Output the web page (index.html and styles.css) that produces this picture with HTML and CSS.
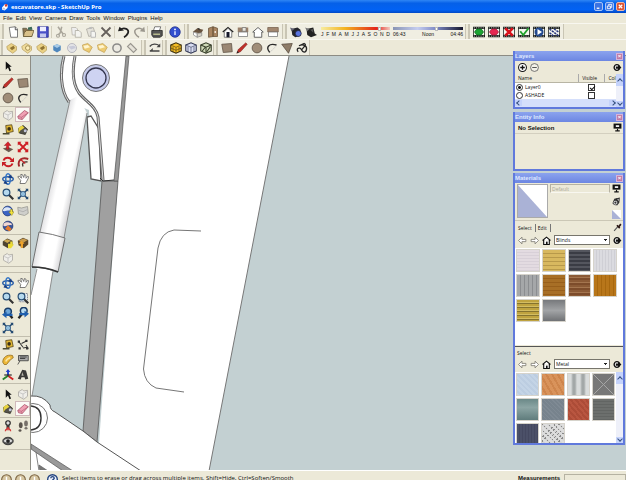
FILE: index.html
```html
<!DOCTYPE html>
<html lang="en">
<head>
<meta charset="utf-8">
<title>escavatore.skp - SketchUp Pro</title>
<link rel="stylesheet" href="styles.css">
</head>
<body>
<svg class="sprite" aria-hidden="true">
  <symbol id="new" viewBox="0 0 16 16"><path d="M3 2l8-1 3 3v11H5z" fill="#fff" stroke="#555"/><path d="M11 1v4h3" fill="#ddd" stroke="#333"/></symbol>
  <symbol id="open" viewBox="0 0 16 16"><path d="M1 3h5l2 2h5v9H2z" fill="#8a7350" stroke="#554"/><path d="M3 9l3-3h10l-3 8H2z" fill="#d8c08a" stroke="#665530"/><path d="M8 2l5-1 1 4H8z" fill="#3c6a58"/></symbol>
  <symbol id="save" viewBox="0 0 16 16"><path d="M1 1h14v14H1z" fill="#4a50c8" stroke="#23268a"/><path d="M4 1h8v6H4z" fill="#eef"/><path d="M4 10h8v5H4z" fill="#c5c9ee"/></symbol>
  <symbol id="cut" viewBox="0 0 16 16"><path d="M4 1l7 10M9 1L7 9l-3 3" fill="none" stroke="#aaa69b" stroke-width="2"/><circle cx="4" cy="13" r="2" fill="none" stroke="#aaa69b" stroke-width="1.5"/><circle cx="12" cy="12" r="2" fill="none" stroke="#aaa69b" stroke-width="1.5"/></symbol>
  <symbol id="copy" viewBox="0 0 16 16"><path d="M2 2h6l2 2v8H3z" fill="#eee" stroke="#b5b2a8"/><path d="M7 6h5l3 3v6H7z" fill="#f4f4f0" stroke="#aaa79d"/></symbol>
  <symbol id="paste" viewBox="0 0 16 16"><path d="M2 4l9-2 3 9-9 3z" fill="#e4e2da" stroke="#aaa79d"/><path d="M5 2l4-1v3H5z" fill="#bbb"/><path d="M8 7h4l2 2v6H8z" fill="#f5f5f2" stroke="#aaa"/></symbol>
  <symbol id="del" viewBox="0 0 16 16"><path d="M2 2l12 12M14 2L2 14" stroke="#66615d" stroke-width="2.4"/></symbol>
  <symbol id="undo" viewBox="0 0 16 16"><path d="M3 5c5-4 13-1 10 5-1 2-3 4-5 5" fill="none" stroke="#222" stroke-width="2.4"/><path d="M0 7l2-6 6 5z" fill="#222"/></symbol>
  <symbol id="redo" viewBox="0 0 16 16"><path d="M13 5C8 1 0 4 3 10c1 2 3 4 5 5" fill="none" stroke="#9b978e" stroke-width="2"/><path d="M16 8l-1-7-6 6z" fill="#9b978e"/></symbol>
  <symbol id="print" viewBox="0 0 16 16"><path d="M5 1h8l-2 6H3z" fill="#fff" stroke="#555"/><path d="M1 6h14v7l-3 2H3l-2-3z" fill="#555" stroke="#222"/><path d="M3 10h9v2H3z" fill="#b6b98c"/></symbol>
  <symbol id="info" viewBox="0 0 16 16"><circle cx="8" cy="8" r="7" fill="#3350cf" stroke="#1c2c88"/><path d="M8 7v5" stroke="#dfe6ff" stroke-width="2"/><circle cx="8" cy="4.5" r="1.2" fill="#fff"/></symbol>
  <symbol id="iso" viewBox="0 0 16 16"><path d="M1 8l6-5 8 2-3 5z" fill="#695440"/><path d="M2 8l5 2v5l-5-3z" fill="#fff" stroke="#888"/><path d="M7 10l6-1v4l-6 2z" fill="#d9d4ca" stroke="#888"/><path d="M7 3h3v3z" fill="#222"/></symbol>
  <symbol id="top" viewBox="0 0 16 16"><path d="M2 3l6-2v13l-6 1zM8 1l6 2v11H8z" fill="#a88461" stroke="#665039"/><path d="M10 7h2v2h-2z" fill="#fff"/></symbol>
  <symbol id="front" viewBox="0 0 16 16"><path d="M1 8l7-6 7 6" fill="none" stroke="#222" stroke-width="1.6"/><path d="M3 8l5-5 5 5v7H3z" fill="#fff" stroke="#555"/><path d="M6 8h4v7H6z" fill="#15182a"/></symbol>
  <symbol id="right" viewBox="0 0 16 16"><path d="M1 2h14v6H1z" fill="#9a806a"/><path d="M2 8h12v6H2z" fill="#fff" stroke="#777"/><path d="M7 2h5v5H7z" fill="#e9e6dd" stroke="#777"/></symbol>
  <symbol id="back" viewBox="0 0 16 16"><path d="M3 15V8L1 8l7-6 7 6h-2v7z" fill="#fff" stroke="#555" stroke-width="1.2"/></symbol>
  <symbol id="left" viewBox="0 0 16 16"><path d="M1 2h14v6H1z" fill="#a28770" stroke="#75604e"/><path d="M2 8h12v6H2z" fill="#fff" stroke="#777"/></symbol>
  <symbol id="shadow" viewBox="0 0 16 16"><path d="M2 4l8-2 4 3v8l-7 2-4-3z" fill="#25262c"/><path d="M0 2l6 2-4 3z" fill="#667"/><circle cx="11" cy="10" r="4" fill="#5a74e0" stroke="#223"/></symbol>
  <symbol id="shadow2" viewBox="0 0 16 16"><path d="M2 4l9-2 2 8 3 2-8 3-5-3z" fill="#222"/><path d="M0 2l6 2-3 3z" fill="#777"/><path d="M7 5l4-1v5z" fill="#555"/></symbol>
  <symbol id="film" viewBox="0 0 16 16"><path d="M0 1h16v14H0z" fill="#1b1f1b"/><path d="M1 4h14v8H1z" fill="#f4f6ef"/><path d="M1 2.5h14M1 13.5h14" stroke="#eee" stroke-dasharray="1.5 1.5"/></symbol>
  <symbol id="scene-add" viewBox="0 0 16 16"><use href="#film"/><path d="M2 8l3-4h6l3 4-3 4H5z" fill="#1ca433" stroke="#0a6a1d"/></symbol>
  <symbol id="scene-del" viewBox="0 0 16 16"><use href="#film"/><path d="M2 8l3-4h6l3 4-3 4H5z" fill="#e62852" stroke="#a3183a"/></symbol>
  <symbol id="scene-x" viewBox="0 0 16 16"><use href="#film"/><path d="M3 3l10 10M13 3L3 13" stroke="#d9121b" stroke-width="3.5"/></symbol>
  <symbol id="scene-ok" viewBox="0 0 16 16"><use href="#film"/><path d="M3 7l4 5 7-9" fill="none" stroke="#1fa12c" stroke-width="2.5"/></symbol>
  <symbol id="scene-play" viewBox="0 0 16 16"><use href="#film"/><circle cx="8" cy="8" r="6" fill="#22498f"/><path d="M6 4l6 4-6 4z" fill="#fff"/></symbol>
  <symbol id="scene-set" viewBox="0 0 16 16"><use href="#film"/><path d="M2 4l12 9M8 4l6 4M2 9l5 4" stroke="#27357d" stroke-width="2" stroke-dasharray="3 1"/></symbol>
  <symbol id="gold" viewBox="0 0 16 16"><path d="M1 6l6-4 7 4v5l-5 4-7-5z" fill="#ead184" stroke="#b9a062"/><path d="M5 8l5-3 2 3-4 3z" fill="#8f7333"/></symbol>
  <symbol id="gold2" viewBox="0 0 16 16"><path d="M1 6l6-4 7 4v5l-5 4-7-5z" fill="#efdc9c" stroke="#b9a062"/><circle cx="9" cy="8" r="3" fill="#fff0b8" stroke="#8c753b"/></symbol>
  <symbol id="gold3" viewBox="0 0 16 16"><path d="M2 4l7-2 6 5-4 7-8-4z" fill="#edcb72" stroke="#c3a256"/><path d="M3 5l6-1 3 3-7 2z" fill="#fff5cf"/></symbol>
  <symbol id="bluecube" viewBox="0 0 16 16"><path d="M3 5l5-2 5 2v6l-5 3-5-3z" fill="#4f87bd"/><path d="M3 5l5-2 5 2-5 3z" fill="#a9cbe6"/></symbol>
  <symbol id="ghost" viewBox="0 0 16 16"><circle cx="8" cy="8" r="6" fill="#e4e4e6" stroke="#aaaab4"/><path d="M3 6l8-1 2 3-6 2z" fill="#c7c9d8"/></symbol>
  <symbol id="ring" viewBox="0 0 16 16"><circle cx="8" cy="8" r="5.5" fill="#eceae2" stroke="#8b8a88" stroke-width="2"/></symbol>
  <symbol id="tilt" viewBox="0 0 16 16"><path d="M6 2l8 8-4 4-8-8z" fill="#e6e3d9" stroke="#99968f" stroke-width="1.5"/></symbol>
  <symbol id="swap" viewBox="0 0 16 16"><path d="M1 6c3-4 9-4 13-1M1 12h13" fill="none" stroke="#444" stroke-width="1.8"/><path d="M15 2v5h-5zM1 12l4-4v4z" fill="#444"/></symbol>
  <symbol id="cube-y" viewBox="0 0 16 16"><path d="M1 4l7-3 7 3v8l-7 3-7-3z" fill="#f5bd25" stroke="#3c3010" stroke-width="1.4"/><path d="M1 4l7 3 7-3M8 7v8M4 6v8M12 6v7M1 8l7 3 7-3" fill="none" stroke="#3c3010" stroke-width=".7"/></symbol>
  <symbol id="cube-b" viewBox="0 0 16 16"><path d="M1 4l7-3 7 3v8l-7 3-7-3z" fill="#d9ddf2" stroke="#333955" stroke-width="1.4"/><path d="M1 4l7 3 7-3M8 7v8M4 6v8M12 6v7" fill="none" stroke="#333955" stroke-width=".8"/></symbol>
  <symbol id="cube-g" viewBox="0 0 16 16"><path d="M1 4l7-3 7 3v8l-7 3-7-3z" fill="#cfd9b7" stroke="#363d29" stroke-width="1.4"/><path d="M1 4l7 3 7-3M8 7v8M3 12l4-5M9 13l5-7" fill="none" stroke="#363d29" stroke-width="1.4"/></symbol>
  <symbol id="rect" viewBox="0 0 16 16"><path d="M1 3l13-1 1 11-12 1z" fill="#9b8874" stroke="#5d5144"/></symbol>
  <symbol id="pencil" viewBox="0 0 16 16"><path d="M1 15l2-5L13 1l2 2L6 13z" fill="#c0312b" stroke="#6b1a15" stroke-width=".6"/><path d="M1 15l1-3 2 2z" fill="#222"/></symbol>
  <symbol id="circle" viewBox="0 0 16 16"><circle cx="8" cy="8" r="6.5" fill="#a08d78" stroke="#554a3e"/></symbol>
  <symbol id="arc" viewBox="0 0 16 16"><path d="M5 14C-1 7 4 1 14 4" fill="none" stroke="#2b2b2b" stroke-width="1.8"/><path d="M5 14l9-9" stroke="#bbb" stroke-dasharray="2 1"/></symbol>
  <symbol id="poly" viewBox="0 0 16 16"><path d="M1 3l14-1-5 13z" fill="#8f7d69" stroke="#554a3e"/></symbol>
  <symbol id="free" viewBox="0 0 16 16"><path d="M3 13c-4-4 2-7 4-3s6 5 7 0-5-8-10-5l7-3c4 1-1 5-4 9" fill="none" stroke="#252525" stroke-width="1.7"/></symbol>
  <symbol id="arrow" viewBox="0 0 16 16"><path d="M5 2v11l3-3 2 5 2-1-2-5h3z" fill="#111"/></symbol>
  <symbol id="comp" viewBox="0 0 16 16"><path d="M2 5l5-3 2 2 5-1v8l-5 4-7-4z" fill="#efeee9" stroke="#a6a39c"/><path d="M3 6l5 2 5-3M8 8v6" fill="none" stroke="#bbb"/></symbol>
  <symbol id="eraser" viewBox="0 0 16 16"><path d="M1 10l9-8 5 3-8 9-5-1z" fill="#f0a0b4" stroke="#a34c62"/><path d="M1 10l5 1 9-6M6 11l1 3" fill="none" stroke="#b8647a"/></symbol>
  <symbol id="tape" viewBox="0 0 16 16"><path d="M5 2l8-1 2 9-9 2z" fill="#e1b836" stroke="#4c3b10"/><circle cx="9.5" cy="6.5" r="2.4" fill="#3c3014"/><path d="M1 13h9" stroke="#4b4a33" stroke-width="2"/></symbol>
  <symbol id="bucket" viewBox="0 0 16 16"><path d="M2 6l6-4 6 5-3 7-8-2z" fill="#55534a" stroke="#26241d"/><path d="M2 5l5-3 3 3-6 4-2 4z" fill="#e9d43f"/><circle cx="11" cy="9" r="2" fill="#c2c7da"/></symbol>
  <symbol id="push" viewBox="0 0 16 16"><path d="M1 10l7-2 7 3-6 4z" fill="#6c5c50"/><path d="M6 11V6H3l5-5 4 5H9v5z" fill="#d8222a" stroke="#8d1217" stroke-width=".6"/></symbol>
  <symbol id="move" viewBox="0 0 16 16"><path d="M8 8L2 2M8 8l6-6M8 8l-6 6M8 8l6 6" stroke="#ce1e24" stroke-width="2.4"/><path d="M1 1h5L1 6zM15 1h-5l5 5zM1 15h5l-5-5zM15 15h-5l5-5z" fill="#ce1e24"/></symbol>
  <symbol id="rotate" viewBox="0 0 16 16"><path d="M13 6C11 1 4 1 2 6M3 10c2 5 9 5 11 0" fill="none" stroke="#c81f25" stroke-width="2.6"/><path d="M16 2v6h-6zM0 14V8h6z" fill="#c81f25"/></symbol>
  <symbol id="offset" viewBox="0 0 16 16"><path d="M3 14C0 6 6 1 15 4" fill="none" stroke="#a4282b" stroke-width="2.5"/><path d="M8 14c-2-4 1-7 6-6" fill="none" stroke="#42332d" stroke-width="1.8"/><path d="M4 4l7 6" stroke="#c81f25" stroke-width="1.6"/></symbol>
  <symbol id="orbit" viewBox="0 0 16 16"><ellipse cx="8" cy="8" rx="7" ry="3" fill="none" stroke="#2c5fa8" stroke-width="2"/><ellipse cx="8" cy="8" rx="3" ry="7" fill="none" stroke="#3575c4" stroke-width="2"/><path d="M12 2l2 5-6-1zM4 10l4 5-6-1z" fill="#183c80"/></symbol>
  <symbol id="pan" viewBox="0 0 16 16"><path d="M4 14l1-4-4-5 2-1 3 3-1-5 2 0 2 4 1-4 2 1v4l3-3 1 1-3 6-2 3z" fill="#fff" stroke="#555"/></symbol>
  <symbol id="zoom" viewBox="0 0 16 16"><path d="M9 9l6 6" stroke="#333" stroke-width="2.8"/><circle cx="6" cy="6" r="4.5" fill="#b6d9ee" stroke="#254c74" stroke-width="1.6"/></symbol>
  <symbol id="extents" viewBox="0 0 16 16"><path d="M2 2l12 12M14 2L2 14" stroke="#214870" stroke-width="2"/><path d="M1 1h4L1 5zM15 1h-4l4 4zM1 15h4l-4-4zM15 15h-4l4-4z" fill="#214870"/><circle cx="8" cy="8" r="3.5" fill="#91bedd" stroke="#254c74"/></symbol>
  <symbol id="zoomwin" viewBox="0 0 16 16"><path d="M3 2h11v11H3z" fill="#e5eef4" stroke="#667" stroke-dasharray="2 1"/><use href="#zoom"/></symbol>
  <symbol id="prev" viewBox="0 0 16 16"><path d="M9 9l5 6" stroke="#222" stroke-width="3"/><circle cx="8" cy="6" r="4.5" fill="#6ea6d8" stroke="#193c68" stroke-width="2"/><path d="M0 10l6-4v3h8v3H6v3z" fill="#1f5fae"/></symbol>
  <symbol id="next" viewBox="0 0 16 16"><path d="M7 9l-5 6" stroke="#222" stroke-width="3"/><circle cx="9" cy="5" r="4.5" fill="#b5d9ef" stroke="#193c68" stroke-width="2"/><path d="M16 9l-6-4v3H3v3h7v3z" fill="#1f5fae"/></symbol>
  <symbol id="globe" viewBox="0 0 16 16"><circle cx="7.5" cy="8" r="6.5" fill="#3b64c4" stroke="#1e3470"/><path d="M2 5c4-3 7-2 10 0l1 3c-5-2-8 1-12 0z" fill="#dce6f6"/><path d="M9 9h2V6h3v3h2l-3 5z" fill="#f2e13a" stroke="#776c10" stroke-width=".5"/></symbol>
  <symbol id="globe-r" viewBox="0 0 16 16"><circle cx="8" cy="8" r="6.5" fill="#38549b" stroke="#1e3470"/><path d="M2 5c4-3 7-2 11 0v2C8 6 6 9 2 8z" fill="#f1d8d2"/><path d="M4 12l4-5 5 5-3 3z" fill="#e47a2c"/></symbol>
  <symbol id="terrain" viewBox="0 0 16 16"><path d="M1 3l5 1 8-2 1 9-5 3-8-2z" fill="#cfcfcb" stroke="#96968f"/><path d="M2 7l6 2 6-3" fill="none" stroke="#aaa"/></symbol>
  <symbol id="getm" viewBox="0 0 16 16"><path d="M1 6l6-4 7 3v6l-6 4-7-4z" fill="#4d4432"/><path d="M2 5l5-2 5 2-5 3z" fill="#cda954"/><path d="M8 15V9h3V6h3v4l2 0-4 5z" fill="#ecdb35"/></symbol>
  <symbol id="sharem" viewBox="0 0 16 16"><path d="M1 5l7-4 7 3v6l-6 5-7-4z" fill="#5a462c"/><path d="M2 5l6-3 6 2-6 4z" fill="#c99b4b"/><path d="M5 15V9H2l4-4 4 4H8v5z" fill="#efa32b"/></symbol>
  <symbol id="dims" viewBox="0 0 16 16"><path d="M2 3l3 4 3 4M6 6l6-3M8 12l6-1M12 8l3 5" stroke="#333" stroke-width="1.4" fill="none"/><path d="M1 2h3v3H1zM11 1h3v3h-3zM12 11h3v3h-3zM2 11h3v3H2z" fill="#333"/></symbol>
  <symbol id="protractor" viewBox="0 0 16 16"><path d="M1 11C1 5 6 0 14 2l1 3c-4 2-6 6-9 9H3z" fill="#edb83a" stroke="#8c6517"/><path d="M5 10c1-3 3-4 6-5" fill="none" stroke="#fbe9a8" stroke-width="2"/></symbol>
  <symbol id="text" viewBox="0 0 16 16"><path d="M2 2h13v7H2z" fill="#aaa" stroke="#333"/><path d="M4 4h9M4 6h7" stroke="#222"/><path d="M4 9l-3 5" stroke="#333"/></symbol>
  <symbol id="axes" viewBox="0 0 16 16"><path d="M8 10V2" stroke="#1d3fc9" stroke-width="2.5"/><path d="M5 4l3-4 3 4z" fill="#1d3fc9"/><path d="M8 9l7 5" stroke="#d02222" stroke-width="2.5"/><path d="M8 9l-7 5" stroke="#27822c" stroke-width="2.5"/><path d="M3 8h10" stroke="#222" stroke-width="1.5"/></symbol>
  <symbol id="text3d" viewBox="0 0 16 16"><path d="M1 13L7 1l5 1 3 11-4 1-1-3H6l-1 3z" fill="#3b3a37"/><path d="M7 4l2 5H6z" fill="#b7b4a8"/></symbol>
  <symbol id="pawn" viewBox="0 0 16 16"><circle cx="8" cy="4" r="3" fill="#ddd" stroke="#222" stroke-width="1.5"/><path d="M6 7h4v5H6z" fill="#333"/><path d="M4 15l4-5 4 5M4 13h8" fill="none" stroke="#d33a3a" stroke-width="1.5"/></symbol>
  <symbol id="walk" viewBox="0 0 16 16"><ellipse cx="5" cy="7" rx="2.5" ry="4" fill="#5b554e"/><ellipse cx="4" cy="14" rx="2" ry="1.8" fill="#5b554e"/><ellipse cx="12" cy="4.500" rx="2.5" ry="4" fill="#77716a"/><ellipse cx="12" cy="11" rx="2" ry="1.8" fill="#77716a"/></symbol>
  <symbol id="eye" viewBox="0 0 16 16"><ellipse cx="8" cy="8" rx="7" ry="5" fill="#555" stroke="#222"/><path d="M2 8c3-4 9-4 12 0-3 3-9 3-12 0z" fill="#ddd"/><circle cx="8" cy="8" r="2.5" fill="#222"/></symbol>
  <symbol id="plus" viewBox="0 0 16 16"><circle cx="8" cy="8" r="7" fill="#fff" stroke="#111" stroke-width="1.8"/><path d="M8 4v8M4 8h8" stroke="#111" stroke-width="2.4"/></symbol>
  <symbol id="minus" viewBox="0 0 16 16"><circle cx="8" cy="8" r="7" fill="#f4f2e8" stroke="#555" stroke-width="1.4"/><path d="M4 8h8" stroke="#555" stroke-width="1.8"/></symbol>
  <symbol id="detail" viewBox="0 0 16 16"><circle cx="7" cy="8" r="5" fill="#fff" stroke="#111" stroke-width="2.4"/><path d="M5 6h4V3l6 5-6 5v-3H5z" fill="#111"/></symbol>
  <symbol id="monitor" viewBox="0 0 16 16"><path d="M1 1h14v9H1z" fill="#111"/><path d="M5 4h6v3H5z" fill="#fff"/><path d="M8 10v3M4 14h8" stroke="#111" stroke-width="2"/></symbol>
  <symbol id="makemat" viewBox="0 0 16 16"><path d="M4 3l10-2-1 9-4 5-8-3z" fill="#333"/><circle cx="6" cy="10" r="4" fill="#ddd" stroke="#222"/><path d="M6 8v4M4 10h4M7 3l4 2" stroke="#111" stroke-width="1.2"/><path d="M9 4h3v3z" fill="#eee"/></symbol>
  <symbol id="half" viewBox="0 0 16 16"><path d="M0 0h16v16H0z" fill="#fff"/><path d="M0 0l16 16H0z" fill="#aab2d6"/></symbol>
  <symbol id="dropper" viewBox="0 0 16 16"><path d="M2 14l7-8" stroke="#555" stroke-width="2"/><path d="M7 4l5 5M10 7l4-5" stroke="#2a1715" stroke-width="3"/></symbol>
  <symbol id="larr" viewBox="0 0 16 16"><path d="M1 8l6-6v4h7v4H7v4z" fill="#fff" stroke="#77746b" stroke-width="1.4"/></symbol>
  <symbol id="rarr" viewBox="0 0 16 16"><path d="M15 8L9 2v4H2v4h7v4z" fill="#fff" stroke="#77746b" stroke-width="1.4"/></symbol>
  <symbol id="home" viewBox="0 0 16 16"><path d="M1 8l7-6 7 6M3 7v8h10V7" fill="#fff" stroke="#111" stroke-width="2"/><path d="M7 10h3v5H7z" fill="#111"/></symbol>
  <symbol id="help" viewBox="0 0 16 16"><circle cx="8" cy="8" r="7" fill="#eef2fb" stroke="#22437f" stroke-width="2"/><path d="M5.5 6c0-3 5-3 5 0 0 1.500-2.500 1.500-2.500 4M8 11v2" fill="none" stroke="#22437f" stroke-width="2"/></symbol>
  <symbol id="badge" viewBox="0 0 16 16"><circle cx="8" cy="8" r="7" fill="#d6c6a2" stroke="#7d6543" stroke-width="1.6"/><path d="M8 4v6M6 11h4" stroke="#fff" stroke-width="2"/></symbol>
  <symbol id="app" viewBox="0 0 16 16"><path d="M2 9l6-7 6 2-1 6-6 5-5-2z" fill="#fff"/><path d="M7 3l5-1 1 4-4 2z" fill="#d23c2e"/><path d="M3 9l5 1-1 4-4-2z" fill="#b9c3dc"/></symbol>
</svg>

<header class="titlebar">
  <svg class="app-icon"><use href="#app"/></svg>
  <h1>escavatore.skp - SketchUp Pro</h1>
  <div class="window-buttons">
    <button class="winbtn" aria-label="Minimize"><svg viewBox="0 0 8 8"><path d="M2 6h3" stroke="#fff" stroke-width="1.5"/></svg></button>
    <button class="winbtn" aria-label="Restore"><svg viewBox="0 0 8 8"><path d="M3 3V1.5h3.5V5H5M1.5 3.5H5v3H1.5z" fill="none" stroke="#fff"/></svg></button>
    <button class="winbtn close" aria-label="Close"><svg viewBox="0 0 8 8"><path d="M2 2l4 4M6 2L2 6" stroke="#fff" stroke-width="1.4"/></svg></button>
  </div>
</header>

<nav class="menubar" aria-label="Main menu">
  <button>File</button><button>Edit</button><button>View</button><button>Camera</button><button>Draw</button><button>Tools</button><button>Window</button><button>Plugins</button><button>Help</button>
</nav>

<div class="toolbars">
  <div class="toolbar-row standard">
    <div class="group">
      <button class="tool" aria-label="New"><svg><use href="#new"/></svg></button>
      <button class="tool" aria-label="Open"><svg><use href="#open"/></svg></button>
      <button class="tool" aria-label="Save"><svg><use href="#save"/></svg></button>
      <i class="sep"></i>
      <button class="tool" aria-label="Cut"><svg><use href="#cut"/></svg></button>
      <button class="tool" aria-label="Copy"><svg><use href="#copy"/></svg></button>
      <button class="tool" aria-label="Paste"><svg><use href="#paste"/></svg></button>
      <button class="tool" aria-label="Erase"><svg><use href="#del"/></svg></button>
      <i class="sep"></i>
      <button class="tool" aria-label="Undo"><svg><use href="#undo"/></svg></button>
      <button class="tool" aria-label="Redo"><svg><use href="#redo"/></svg></button>
      <i class="sep"></i>
      <button class="tool" aria-label="Print"><svg><use href="#print"/></svg></button>
      <i class="sep"></i>
      <button class="tool" aria-label="Model info"><svg><use href="#info"/></svg></button>
    </div>
    <div class="group">
      <button class="tool" aria-label="Iso"><svg><use href="#iso"/></svg></button>
      <button class="tool" aria-label="Top"><svg><use href="#top"/></svg></button>
      <button class="tool" aria-label="Front"><svg><use href="#front"/></svg></button>
      <button class="tool" aria-label="Right"><svg><use href="#right"/></svg></button>
      <button class="tool" aria-label="Back"><svg><use href="#back"/></svg></button>
      <button class="tool" aria-label="Left"><svg><use href="#left"/></svg></button>
    </div>
    <div class="group">
      <button class="tool" aria-label="Shadow settings"><svg><use href="#shadow"/></svg></button>
      <button class="tool" aria-label="Show shadows"><svg><use href="#shadow2"/></svg></button>
      <div class="slider date">
        <input type="range" min="1" max="365" value="315" aria-label="Date">
        <div class="ticks"><span>J</span><span>F</span><span>M</span><span>A</span><span>M</span><span>J</span><span>J</span><span>A</span><span>S</span><span>O</span><span>N</span><span>D</span></div>
      </div>
      <div class="slider time">
        <input type="range" min="0" max="100" value="63" aria-label="Time">
        <div class="ticks"><span>06:43</span><span>Noon</span><span>04:46</span></div>
      </div>
    </div>
    <div class="group">
      <button class="tool" aria-label="Add scene"><svg><use href="#scene-add"/></svg></button>
      <button class="tool" aria-label="Remove scene"><svg><use href="#scene-del"/></svg></button>
      <button class="tool" aria-label="Delete all scenes"><svg><use href="#scene-x"/></svg></button>
      <button class="tool" aria-label="Update scene"><svg><use href="#scene-ok"/></svg></button>
      <button class="tool" aria-label="Play"><svg><use href="#scene-play"/></svg></button>
      <button class="tool" aria-label="Scene settings"><svg><use href="#scene-set"/></svg></button>
    </div>
  </div>
  <div class="toolbar-row drawing">
    <div class="group">
      <button class="tool" aria-label="Outer shell"><svg><use href="#gold"/></svg></button>
      <button class="tool" aria-label="Intersect"><svg><use href="#gold2"/></svg></button>
      <button class="tool" aria-label="Union"><svg><use href="#gold"/></svg></button>
      <button class="tool" aria-label="Solid"><svg><use href="#bluecube"/></svg></button>
      <button class="tool" aria-label="X-ray"><svg><use href="#ghost"/></svg></button>
      <button class="tool" aria-label="Subtract"><svg><use href="#gold3"/></svg></button>
      <button class="tool" aria-label="Trim"><svg><use href="#gold3"/></svg></button>
      <button class="tool" aria-label="Ring"><svg><use href="#ring"/></svg></button>
      <button class="tool" aria-label="Plane"><svg><use href="#tilt"/></svg></button>
    </div>
    <div class="group">
      <button class="tool" aria-label="Swap"><svg><use href="#swap"/></svg></button>
    </div>
    <div class="group">
      <button class="tool" aria-label="Cube from scratch"><svg><use href="#cube-y"/></svg></button>
      <button class="tool" aria-label="Smoove"><svg><use href="#cube-b"/></svg></button>
      <button class="tool" aria-label="Drape"><svg><use href="#cube-g"/></svg></button>
    </div>
    <div class="group">
      <button class="tool" aria-label="Rectangle"><svg><use href="#rect"/></svg></button>
      <button class="tool" aria-label="Line"><svg><use href="#pencil"/></svg></button>
      <button class="tool" aria-label="Circle"><svg><use href="#circle"/></svg></button>
      <button class="tool" aria-label="Arc"><svg><use href="#arc"/></svg></button>
      <button class="tool" aria-label="Polygon"><svg><use href="#poly"/></svg></button>
      <button class="tool" aria-label="Freehand"><svg><use href="#free"/></svg></button>
    </div>
  </div>
</div>

<main class="workspace">
  <aside class="rail" aria-label="Large tool set">
    <div class="set">
      <button class="tool" aria-label="Select"><svg><use href="#arrow"/></svg></button>
    </div>
    <div class="set">
      <button class="tool" aria-label="Line"><svg><use href="#pencil"/></svg></button>
      <button class="tool" aria-label="Rectangle"><svg><use href="#rect"/></svg></button>
      <button class="tool" aria-label="Circle"><svg><use href="#circle"/></svg></button>
      <button class="tool" aria-label="Arc"><svg><use href="#arc"/></svg></button>
    </div>
    <div class="set">
      <button class="tool" aria-label="Make component"><svg><use href="#comp"/></svg></button>
      <button class="tool active" aria-label="Eraser"><svg><use href="#eraser"/></svg></button>
      <button class="tool" aria-label="Tape measure"><svg><use href="#tape"/></svg></button>
      <button class="tool" aria-label="Paint bucket"><svg><use href="#bucket"/></svg></button>
    </div>
    <div class="set">
      <button class="tool" aria-label="Push/Pull"><svg><use href="#push"/></svg></button>
      <button class="tool" aria-label="Move"><svg><use href="#move"/></svg></button>
      <button class="tool" aria-label="Rotate"><svg><use href="#rotate"/></svg></button>
      <button class="tool" aria-label="Offset"><svg><use href="#offset"/></svg></button>
    </div>
    <div class="set">
      <button class="tool" aria-label="Orbit"><svg><use href="#orbit"/></svg></button>
      <button class="tool" aria-label="Pan"><svg><use href="#pan"/></svg></button>
      <button class="tool" aria-label="Zoom"><svg><use href="#zoom"/></svg></button>
      <button class="tool" aria-label="Zoom extents"><svg><use href="#extents"/></svg></button>
    </div>
    <div class="set">
      <button class="tool" aria-label="Get current view"><svg><use href="#globe"/></svg></button>
      <button class="tool" aria-label="Toggle terrain"><svg><use href="#terrain"/></svg></button>
      <button class="tool" aria-label="Place model"><svg><use href="#globe-r"/></svg></button>
    </div>
    <div class="set">
      <button class="tool" aria-label="Get models"><svg><use href="#getm"/></svg></button>
      <button class="tool" aria-label="Share model"><svg><use href="#sharem"/></svg></button>
      <button class="tool" aria-label="Share component"><svg><use href="#comp"/></svg></button>
    </div>
    <div class="set detached">
      <button class="tool" aria-label="Orbit"><svg><use href="#orbit"/></svg></button>
      <button class="tool" aria-label="Pan"><svg><use href="#pan"/></svg></button>
      <button class="tool" aria-label="Zoom"><svg><use href="#zoom"/></svg></button>
      <button class="tool" aria-label="Zoom window"><svg><use href="#zoomwin"/></svg></button>
      <button class="tool" aria-label="Previous"><svg><use href="#prev"/></svg></button>
      <button class="tool" aria-label="Next"><svg><use href="#next"/></svg></button>
      <button class="tool" aria-label="Zoom extents"><svg><use href="#extents"/></svg></button>
    </div>
    <div class="set">
      <button class="tool" aria-label="Tape measure"><svg><use href="#tape"/></svg></button>
      <button class="tool" aria-label="Dimensions"><svg><use href="#dims"/></svg></button>
      <button class="tool" aria-label="Protractor"><svg><use href="#protractor"/></svg></button>
      <button class="tool" aria-label="Text"><svg><use href="#text"/></svg></button>
      <button class="tool" aria-label="Axes"><svg><use href="#axes"/></svg></button>
      <button class="tool" aria-label="3D text"><svg><use href="#text3d"/></svg></button>
    </div>
    <div class="set spaced">
      <button class="tool" aria-label="Select"><svg><use href="#arrow"/></svg></button>
      <button class="tool" aria-label="Make component"><svg><use href="#comp"/></svg></button>
      <button class="tool" aria-label="Paint bucket"><svg><use href="#bucket"/></svg></button>
      <button class="tool active" aria-label="Eraser"><svg><use href="#eraser"/></svg></button>
    </div>
    <div class="set">
      <button class="tool" aria-label="Position camera"><svg><use href="#pawn"/></svg></button>
      <button class="tool" aria-label="Walk"><svg><use href="#walk"/></svg></button>
      <button class="tool" aria-label="Look around"><svg><use href="#eye"/></svg></button>
    </div>
  </aside>

  <div class="viewport">
    <svg class="scene" viewBox="31 55 595 415" preserveAspectRatio="xMinYMin slice" role="img" aria-label="Excavator arm model">
      <defs>
        <linearGradient id="rod" gradientUnits="userSpaceOnUse" x1="47" y1="200" x2="69" y2="205">
          <stop offset="0" stop-color="#e2e2e4"/><stop offset=".3" stop-color="#fff"/><stop offset=".75" stop-color="#fff"/><stop offset="1" stop-color="#dcdcde"/>
        </linearGradient>
        <linearGradient id="collar" gradientUnits="userSpaceOnUse" x1="37" y1="243" x2="62" y2="248">
          <stop offset="0" stop-color="#e2e2e4"/><stop offset=".3" stop-color="#fff"/><stop offset=".75" stop-color="#fff"/><stop offset="1" stop-color="#dcdcde"/>
        </linearGradient>
      </defs>
      <path d="M31 55h595v415H31z" fill="#c3d0d2"/>
      <path d="M127 55h162L209 470H97z" fill="#fff"/>
      <path d="M289 55L209 470" stroke="#777" fill="none"/>
      <path d="M102 180h16L97 441l-14-11z" fill="#a0a0a0" stroke="#555" stroke-width=".8"/>
      <path d="M65 55c-4 14-4 32 4 46l20 8 2 69 12 2 12-70V55z" fill="#fff"/>
      <path d="M87 112L72 175l19 3z" fill="#c3d0d2"/>
      <path d="M64 55c-4 14-4 34 5 46" stroke="#666" stroke-width="3" fill="none"/>
      <path d="M64 55c-4 14-4 34 5 46" stroke="#ddd" fill="none"/>
      <path d="M87 116l4 62 10 2-2-52-8-13z" fill="#fff" stroke="#555" stroke-width="1.3"/>
      <path d="M70 99L40 231l24 6 23-125-9-17z" fill="url(#rod)"/>
      <path d="M70 99L40 231M87 112L64 237" stroke="#777" stroke-width=".8"/>
      <path d="M37 266l16 4-21 125h-1V294z" fill="#fff"/>
      <path d="M37 268l-6 26M53 270L32 395" stroke="#777" stroke-width=".8"/>
      <path d="M39 231q14 2 26 6l-7 34q-12-5-26-5z" fill="url(#collar)" stroke="#666" stroke-width=".9"/>
      <path d="M32 266q14 0 26 5" stroke="#333" stroke-width="1.6" fill="none"/>
      <path d="M75 55c-3 15-3 27 4 37 7 9 17 13 19 24l4 63h12l13-124z" fill="#fff"/>
      <path d="M75 55c-3 15-3 27 4 37 7 9 17 13 19 24l5 63" stroke="#666" stroke-width="3" fill="none"/>
      <path d="M75 55c-3 15-3 27 4 37 7 9 17 13 19 24l5 63" stroke="#ddd" stroke-width="1" fill="none"/>
      <path d="M100 177l3 3 11-1" stroke="#333" fill="none"/>
      <path d="M126 55h3L118 180h-4z" fill="#999" stroke="#555" stroke-width=".7"/>
      <circle cx="96" cy="77" r="13.5" fill="#c6cbea" stroke="#777"/>
      <circle cx="96" cy="77" r="10" fill="#ced3f2" stroke="#34364e" stroke-width="1.3"/>
      <path d="M31 395q12-1 19 9 0 5 5 7l28 19 14 11 44 29H31z" fill="#fff"/>
      <path d="M31 395q12-1 19 9 0 5 5 7l28 19 14 11 44 29" fill="none" stroke="#555"/>
      <circle cx="33" cy="417" r="14.5" fill="none" stroke="#777"/>
      <path d="M31 405q10 1 10 12t-10 12" fill="none" stroke="#333" stroke-width="1.4"/>
      <path d="M31 443l42 27H63L31 448z" fill="#999" stroke="#555" stroke-width=".7"/>
      <path d="M36 451l3 19M39 464l9 6h-8z" fill="#777" stroke="#666" stroke-width=".8"/>
      <path d="M201 230l-27-1q-13 2-16 18l-14.5 121q1 14 12.5 19l28 4" fill="none" stroke="#777"/>
    </svg>
  </div>

  <div class="dock">
    <section class="panel layers">
      <h2>Layers <button class="shut" aria-label="Close Layers">×</button></h2>
      <div class="layer-tools">
        <button class="icon" aria-label="Add layer"><svg><use href="#plus"/></svg></button>
        <button class="icon" aria-label="Delete layer"><svg><use href="#minus"/></svg></button>
        <button class="icon end" aria-label="Details"><svg><use href="#detail"/></svg></button>
      </div>
      <div class="list">
        <div class="list-body">
          <table>
            <thead><tr><th class="name">Name</th><th class="vis">Visible</th><th>Col</th></tr></thead>
            <tbody>
              <tr><td><label><input type="radio" name="layer" checked> Layer0</label></td><td class="check"><input type="checkbox" checked aria-label="Layer0 visible"></td><td></td></tr>
              <tr><td><label><input type="radio" name="layer"> ASHADE</label></td><td class="check"><input type="checkbox" aria-label="ASHADE visible"></td><td></td></tr>
            </tbody>
          </table>
          <div class="hscroll"><button class="sb left" aria-label="Scroll left"></button><button class="sb right" aria-label="Scroll right"></button></div>
        </div>
        <div class="vscroll"><button class="sb up" aria-label="Scroll up"></button><button class="sb down" aria-label="Scroll down"></button></div>
      </div>
    </section>

    <section class="panel entity">
      <h2>Entity Info <button class="shut" aria-label="Close Entity Info">×</button></h2>
      <div class="entity-body"><strong>No Selection</strong><button class="icon" aria-label="Details"><svg><use href="#monitor"/></svg></button></div>
    </section>

    <section class="panel materials">
      <h2>Materials <button class="shut" aria-label="Close Materials">×</button></h2>
      <div class="current">
        <svg class="preview" viewBox="0 0 16 16" preserveAspectRatio="none"><use href="#half"/></svg>
        <input class="mat-name" value="Default" disabled aria-label="Material name">
        <div class="current-tools">
          <button class="icon" aria-label="Secondary pane"><svg><use href="#monitor"/></svg></button>
          <button class="icon" aria-label="Create material"><svg><use href="#makemat"/></svg></button>
          <button class="icon" aria-label="Default material"><svg><use href="#half"/></svg></button>
        </div>
      </div>
      <div class="tabs"><button>Select</button><button>Edit</button><button class="icon end" aria-label="Sample paint"><svg><use href="#dropper"/></svg></button></div>
      <div class="picker">
        <button class="icon" aria-label="Back"><svg><use href="#larr"/></svg></button>
        <button class="icon" aria-label="Forward"><svg><use href="#rarr"/></svg></button>
        <button class="icon" aria-label="In model"><svg><use href="#home"/></svg></button>
        <select aria-label="Collection"><option>Blinds</option></select>
        <button class="icon" aria-label="Details"><svg><use href="#detail"/></svg></button>
      </div>
      <div class="swatches first">
        <button class="sw weave-pink" aria-label="Blinds 1"></button><button class="sw slat-gold" aria-label="Blinds 2"></button><button class="sw slat-dark" aria-label="Blinds 3"></button><button class="sw weave-grey" aria-label="Blinds 4"></button>
        <button class="sw vert-grey" aria-label="Blinds 5"></button><button class="sw wood" aria-label="Blinds 6"></button><button class="sw brick" aria-label="Blinds 7"></button><button class="sw amber" aria-label="Blinds 8"></button>
        <button class="sw bamboo" aria-label="Blinds 9"></button><button class="sw steel" aria-label="Blinds 10"></button>
      </div>
      <div class="second-title">Select</div>
      <div class="picker">
        <button class="icon" aria-label="Back"><svg><use href="#larr"/></svg></button>
        <button class="icon" aria-label="Forward"><svg><use href="#rarr"/></svg></button>
        <button class="icon" aria-label="In model"><svg><use href="#home"/></svg></button>
        <select aria-label="Second collection"><option>Metal</option></select>
        <button class="icon" aria-label="Details"><svg><use href="#detail"/></svg></button>
      </div>
      <div class="scrolled">
        <div class="swatches">
          <button class="sw ice" aria-label="Metal 1"></button><button class="sw copper" aria-label="Metal 2"></button><button class="sw corrugated" aria-label="Metal 3"></button><button class="sw cross" aria-label="Metal 4"></button>
          <button class="sw teal" aria-label="Metal 5"></button><button class="sw slate" aria-label="Metal 6"></button><button class="sw rust" aria-label="Metal 7"></button><button class="sw iron" aria-label="Metal 8"></button>
          <button class="sw navy" aria-label="Metal 9"></button><button class="sw tread" aria-label="Metal 10"></button>
        </div>
        <div class="vscroll"><button class="sb up" aria-label="Scroll up"></button><button class="sb down" aria-label="Scroll down"></button></div>
      </div>
    </section>
  </div>
</main>

<footer class="status">
  <div class="badges"><svg><use href="#badge"/></svg><svg><use href="#badge"/></svg><svg><use href="#badge"/></svg></div>
  <svg><use href="#help"/></svg>
  <span class="hint">Select items to erase or drag across multiple items. Shift=Hide, Ctrl=Soften/Smooth</span>
  <label class="measure" for="vcb">Measurements</label>
  <input id="vcb">
</footer>
</body>
</html>
```

FILE: styles.css
```css
* { box-sizing: border-box; }

body {
  margin: 0;
  height: 100vh;
  display: flex;
  flex-direction: column;
  overflow: hidden;
  background: #ece9d8;
  color: #111;
  font: 6px/8px "Liberation Sans", sans-serif;
}

button, input, select {
  margin: 0;
  padding: 0;
  border: 0;
  border-radius: 0;
  background: none;
  color: inherit;
  font: inherit;
}

svg { display: block; }
.sprite { position: absolute; width: 0; height: 0; }

/* Title bar and menu */
.titlebar {
  flex: none;
  height: 13px;
  display: flex;
  align-items: center;
  gap: 2px;
  padding: 0 1px;
  background: linear-gradient(#2f86f5, #0560e8 25%, #0262f4 75%, #0147c4);
  color: #fff;
}
.app-icon { width: 8px; height: 8px; }
.titlebar h1 { margin: 0; flex: 1; font: bold 6px/8px "Open Sans", sans-serif; }
.window-buttons { display: flex; gap: 2px; }
.winbtn { width: 9px; height: 9px; border: 1px solid #a9c4f5; border-radius: 2px; background: #3b73e3; }
.winbtn.close { background: #dd5434; border-color: #efb7a5; }
.winbtn svg { width: 7px; height: 7px; }

.menubar { flex: none; height: 10px; display: flex; align-items: center; gap: 3px; padding: 0 3px; }

/* Toolbars */
.toolbars { flex: none; border-bottom: 1px solid #8d8c84; }
.toolbar-row { display: flex; gap: 1px; padding-left: 1px; border-top: 1px solid #f8f7f0; }
.toolbar-row.standard { padding-left: 2px; }
.group {
  display: flex;
  align-items: center;
  height: 15px;
  padding: 0 2px 0 1px;
  border-left: 2px solid #c9c5b4;
  border-right: 1px solid #c9c5b4;
  background: #f0eee2;
}
.group + .group { margin-left: 1px; }
.drawing .group { padding-right: 0; }
.drawing .group:first-child { padding-right: 2px; }
.tool {
  width: 15px;
  height: 15px;
  display: flex;
  align-items: center;
  justify-content: center;
}
.tool svg { width: 12px; height: 12px; }
.sep { width: 1px; height: 12px; margin: 0 1px; background: #d2cebd; }

.slider { display: flex; flex-direction: column; gap: 1px; font-size: 5px; line-height: 6px; padding-left: 3px; }
.slider.date { width: 72px; }
.slider.time { width: 73px; }
.ticks { display: flex; justify-content: space-between; }
.slider input { appearance: none; width: 100%; height: 4px; }
.slider input::-webkit-slider-runnable-track { height: 3px; }
.date input::-webkit-slider-runnable-track { background: linear-gradient(90deg, #f7eca0, #f3b321 35%, #e3251b 80%, #f3c9c0); }
.time input::-webkit-slider-runnable-track { background: linear-gradient(90deg, #8994b4, #c5cdf0 35%, #7d88c4 62%, #14152c); }
.slider input::-webkit-slider-thumb { appearance: none; width: 3px; height: 4px; background: #fff; border: 1px solid #bbb; }

/* Workspace */
.workspace { position: relative; flex: 1; min-height: 0; display: flex; }
.rail { flex: none; width: 31px; padding-top: 2px; border-right: 1px solid #8d8c84; overflow: hidden; }
.set { display: grid; grid-template-columns: 15px 15px; border-bottom: 1px solid #c2beae; padding-bottom: 1px; }
.detached { margin-top: 5px; padding-top: 2px; border-top: 1px solid #c2beae; }
.spaced { margin-top: 2px; }
.tool.active { background: #fbfaf6; border: 1px solid #d0b9bb; }
.viewport { flex: 1; min-width: 0; }
.scene { width: 100%; height: 100%; }

/* Floating panels */
.dock { position: absolute; top: -5px; right: 1px; width: 112px; display: flex; flex-direction: column; gap: 2px; font: 5px/8px "Open Sans", sans-serif; }
.panel { border: 2px solid #6079dc; border-top: 0; background: #ece9d8; }
.panel h2 {
  display: flex;
  justify-content: space-between;
  align-items: center;
  height: 10px;
  margin: 0;
  background: linear-gradient(#8ba3ee, #6c86e2);
  color: #dfe8ff;
  font: bold 6px/8px "Liberation Sans", sans-serif;
}
.shut { width: 7px; height: 7px; background: #c07aa5; border: 1px solid #d5b4da; color: #fff; line-height: 5px; }
.icon svg { width: 9px; height: 9px; }
.end { margin-left: auto; }

.layer-tools { display: flex; align-items: center; gap: 3px; height: 13px; padding: 0 1px 0 3px; }
.list { display: flex; background: #fff; }
.list-body { flex: 1; min-width: 0; }
table { width: 100%; border-collapse: collapse; table-layout: fixed; }
th, td { padding: 0; height: 8px; text-align: left; font-weight: normal; line-height: 8px; }
th { background: #ece9d8; border-bottom: 1px solid #b8b5a4; padding-left: 3px; border-left: 1px solid #aaa; }
th.name { width: 63%; border-left: 0; }
th.vis { width: 26%; }
td label { display: flex; align-items: center; gap: 2px; padding-left: 1px; }
td input { appearance: none; display: block; width: 7px; height: 7px; border: 1px solid #333; background: #fff; }
td input[type="radio"] { border-radius: 50%; }
td input[type="radio"]:checked { background: radial-gradient(circle, #111 35%, #fff 45%); }
td input[type="checkbox"] { margin: 0 auto; }
td input[type="checkbox"]:checked::before { content: ""; display: block; width: 4px; height: 2px; margin: 1px 0 0 1px; border: solid #111; border-width: 0 0 1px 1px; transform: rotate(-45deg); }
.hscroll { display: flex; justify-content: space-between; height: 8px; align-items: center; background: #d5dffb; }
.vscroll { flex: none; width: 7px; display: flex; flex-direction: column; justify-content: space-between; background: #eef0f9; }
.sb { width: 7px; height: 6px; background: #c5d3fb; display: grid; place-items: center; }
.sb::after { content: ""; width: 3px; height: 3px; border: solid #35507e; border-width: 1px 0 0 1px; }
.up::after { transform: translateY(1px) rotate(45deg); }
.down::after { transform: translateY(-1px) rotate(225deg); }
.left::after { transform: rotate(-45deg); }
.right::after { transform: rotate(135deg); }
.vscroll .up { height: 12px; }

.entity { margin-top: 1px; }
.entity-body { display: flex; justify-content: space-between; align-items: center; height: 12px; padding: 0 1px 0 3px; margin-bottom: 35px; border-bottom: 1px solid #d3cfbf; font: 6px/8px "Liberation Sans", sans-serif; }

.current { display: flex; gap: 2px; padding: 1px 1px 1px 2px; height: 37px; }
.preview { width: 31px; height: 34px; border: 1px solid #aaa; }
.mat-name { flex: 1; min-width: 0; height: 9px; border: 1px solid #b5b2a2; border-bottom-color: #f8f7f0; padding-left: 1px; color: #a9a697; }
.current-tools { display: flex; flex-direction: column; justify-content: space-between; width: 10px; }
.tabs { display: flex; align-items: center; gap: 2px; height: 14px; padding: 0 1px 0 3px; border-top: 1px solid #cbc7b6; }
.tabs button { padding-right: 3px; }
.tabs button:not(.icon) { border-right: 1px solid #777; }
.tabs .icon { padding: 0; }
.picker { display: flex; align-items: center; gap: 3px; height: 14px; padding: 0 1px 2px 3px; }
.picker select {
  flex: 1;
  min-width: 0;
  height: 10px;
  appearance: none;
  padding-left: 1px;
  border: 1px solid #77756c;
  background: conic-gradient(from -45deg at 50% 100%, #222 90deg, transparent 0) right 2px center / 4px 2px no-repeat, #fff;
  background: linear-gradient(#222, #222) right 3px top 4px / 1px 1px no-repeat, linear-gradient(#222, #222) right 2px top 3px / 3px 1px no-repeat, #fff;
}
.swatches { display: grid; grid-template-columns: repeat(4, 1fr); gap: 2px; align-content: start; padding: 1px; background: #fff; flex: 1; }
.swatches.first { padding-right: 6px; height: 97px; }
.sw { height: 23px; border: 1px solid #d6d3cb; }
.second-title { padding: 2px 2px 1px; margin-top: 1px; border-top: 1px solid #555; }
.scrolled { display: flex; height: 71px; overflow: hidden; }

.weave-pink { background: repeating-linear-gradient(#e3dbe1 0 2px, #d8d0d8 2px 3px); }
.slat-gold { background: repeating-linear-gradient(#d8b85f 0 3px, #b8994a 3px 4px); }
.slat-dark { background: repeating-linear-gradient(#54565e 0 2px, #3a3c44 2px 4px); }
.weave-grey { background: repeating-linear-gradient(90deg, #dbdbe0 0 2px, #cfcfd5 2px 3px); }
.vert-grey { background: repeating-linear-gradient(90deg, #a5a7a9 0 3px, #8b8d90 3px 4px); }
.wood { background: repeating-linear-gradient(#a86f26 0 3px, #985f1b 3px 4px); }
.brick { background: repeating-linear-gradient(#8b5a36 0 2px, #a4754f 2px 3px, #7d4c2b 3px 5px); }
.amber { background: repeating-linear-gradient(90deg, #b8761a 0 3px, #a8680f 3px 4px); }
.bamboo { background: repeating-linear-gradient(#bfa33f 0 2px, #d3bd62 2px 3px, #85732f 3px 4px); }
.steel { background: linear-gradient(#77797c, #a2a4a6 50%, #707275); }
.ice { background: repeating-linear-gradient(45deg, #c4d4e6 0 2px, #bccde1 2px 4px); }
.copper { background: repeating-linear-gradient(60deg, #d9935b 0 3px, #ce854c 3px 5px); }
.corrugated { background: repeating-linear-gradient(90deg, #d9dcdc 0 3px, #a3a8a8 5px 7px, #d9dcdc 9px); }
.cross { background: linear-gradient(45deg, transparent 48%, #a5a5a5 48% 52%, transparent 52%), linear-gradient(135deg, #777 48%, #a5a5a5 48% 52%, #777 52%); }
.teal { background: linear-gradient(#6b8988, #8ca5a4 40%, #5f7c7c); }
.slate { background: repeating-linear-gradient(45deg, #7f8a94 0 1px, #77838d 1px 3px); }
.rust { background: repeating-linear-gradient(50deg, #b95640 0 2px, #ac4c37 2px 4px); }
.iron { background: repeating-linear-gradient(#6c6f6d 0 2px, #626563 2px 3px); }
.navy { background: repeating-linear-gradient(90deg, #4b5068 0 2px, #444860 2px 3px); }
.tread { background: repeating-linear-gradient(45deg, #ddd 0 2px, transparent 2px 4px), repeating-linear-gradient(135deg, #888 0 1px, #d5d5d5 1px 3px); }

/* Status bar */
.status { flex: none; height: 10px; display: flex; align-items: flex-start; gap: 4px; padding: 3px 0 0 1px; border-top: 1px solid #fff; overflow: hidden; }
.status svg { width: 11px; height: 11px; flex: none; }
.badges { display: flex; gap: 3px; padding-right: 3px; }
.hint { flex: 1; white-space: nowrap; font-family: "Open Sans", sans-serif; }
.measure { font-weight: bold; }
.status input { width: 62px; height: 12px; border: 1px solid #b5b2a2; }
```
